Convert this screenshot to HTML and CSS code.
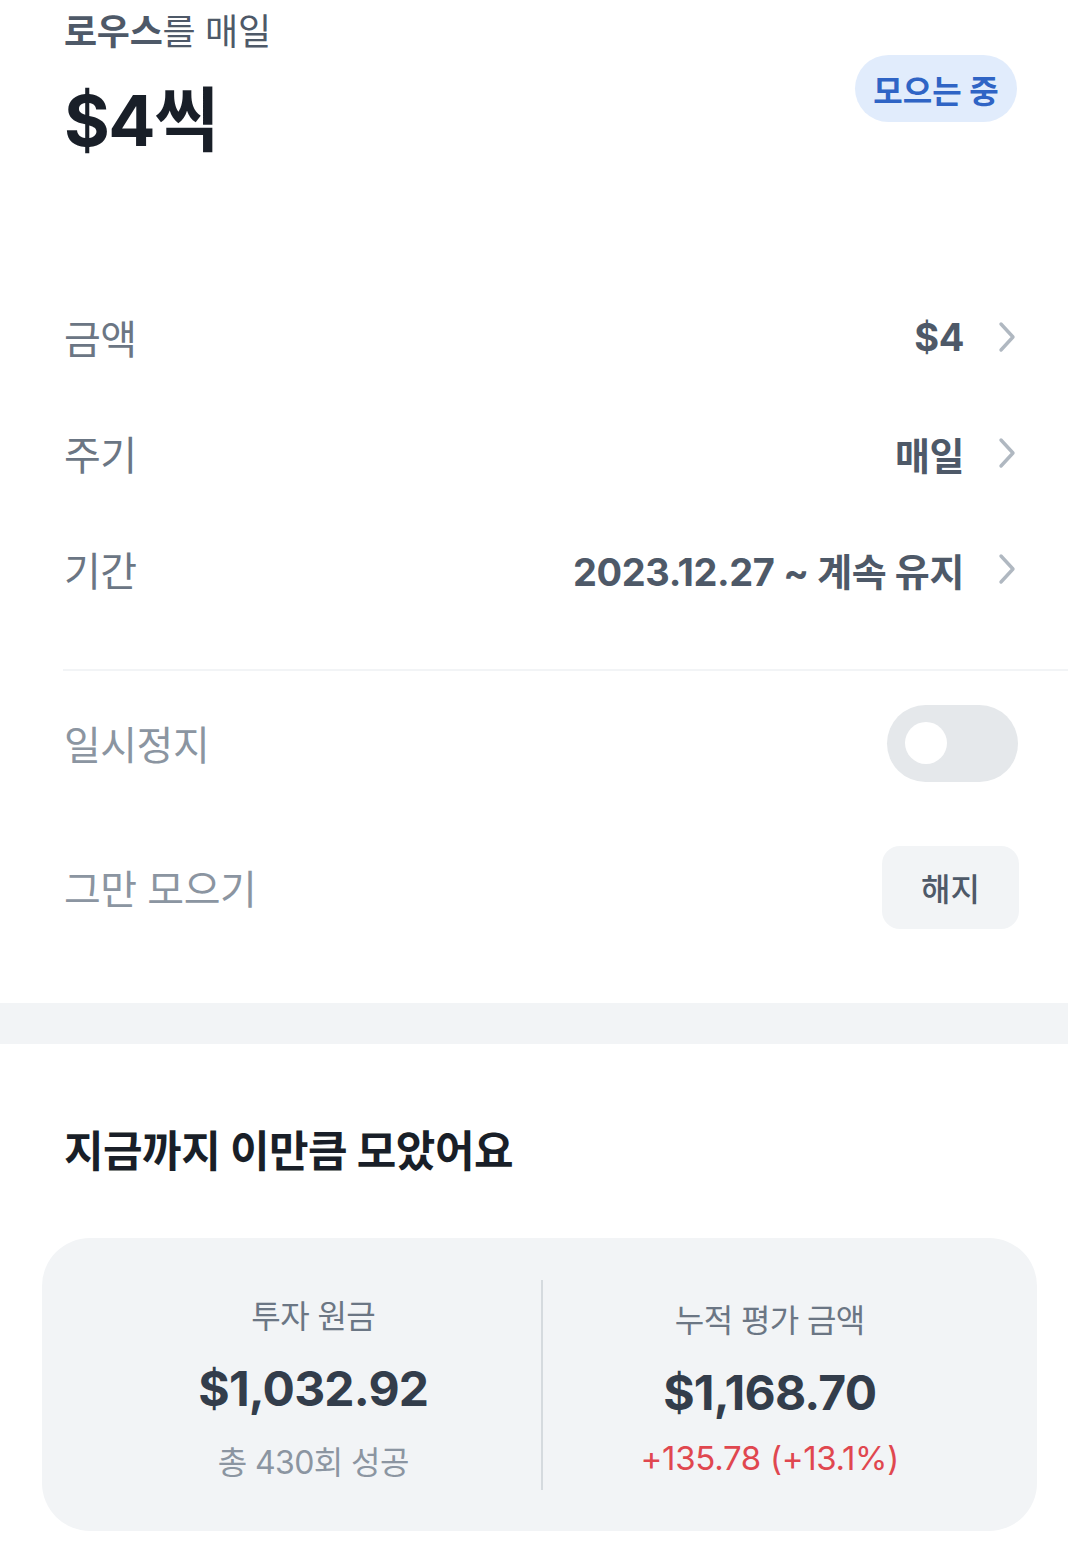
FILE: index.html
```html
<!DOCTYPE html>
<html lang="ko">
<head>
    <meta charset="UTF-8">
    <title>로우스 모으기</title>
    <link rel="stylesheet" href="styles.css">
</head>
<body>
<div class="page">
    <div class="header">
        <div class="title-block">
            <p class="subtitle"><span class="stock">로우스</span>를 매일</p>
            <h1 class="amount">$4씩</h1>
        </div>
        <span class="badge">모으는 중</span>
    </div>

    <div class="settings">
        <div class="row">
            <span class="label">금액</span>
            <span class="value">$4</span>
            <svg class="chevron" viewBox="0 0 20 32"><path d="M4 3 L16 16 L4 29"/></svg>
        </div>
        <div class="row">
            <span class="label">주기</span>
            <span class="value">매일</span>
            <svg class="chevron" viewBox="0 0 20 32"><path d="M4 3 L16 16 L4 29"/></svg>
        </div>
        <div class="row">
            <span class="label">기간</span>
            <span class="value">2023.12.27 ~ 계속 유지</span>
            <svg class="chevron" viewBox="0 0 20 32"><path d="M4 3 L16 16 L4 29"/></svg>
        </div>
    </div>

    <div class="controls">
        <div class="control-row">
            <span class="label light">일시정지</span>
            <div class="toggle"><div class="knob"></div></div>
        </div>
        <div class="control-row">
            <span class="label light">그만 모으기</span>
            <button class="cancel">해지</button>
        </div>
    </div>

    <div class="band"></div>

    <div class="summary">
        <h2>지금까지 이만큼 모았어요</h2>
        <div class="card">
            <div class="col left">
                <span class="col-label">투자 원금</span>
                <span class="col-amount">$1,032.92</span>
                <span class="col-sub">총 430회 성공</span>
            </div>
            <div class="sep"></div>
            <div class="col right">
                <span class="col-label">누적 평가 금액</span>
                <span class="col-amount">$1,168.70</span>
                <span class="col-sub profit">+135.78 (+13.1%)</span>
            </div>
        </div>
    </div>
</div>
</body>
</html>
```

FILE: styles.css
```css
body {
    margin: 0;
    background: #fff;
    font-family: Inter, "Noto Sans CJK KR", sans-serif;
    color: #191f28;
}

.page {
    width: 1068px;
}

.header {
    display: flex;
    justify-content: space-between;
    align-items: flex-start;
    padding: 0 51px 0 64px;
}

.subtitle {
    margin: 8px 0 0;
    font-size: 36px;
    line-height: 48px;
    color: #4e5968;
    letter-spacing: -0.3px;
}

.stock {
    font-weight: 600;
}

.amount {
    margin: 20px 0 0;
    font-size: 70px;
    line-height: 90px;
    font-weight: 700;
    letter-spacing: -1.5px;
}

.badge {
    margin-top: 55px;
    height: 67px;
    width: 162px;
    border-radius: 34px;
    background: #e1ecfc;
    color: #2f64c5;
    font-size: 32px;
    font-weight: 700;
    display: flex;
    align-items: center;
    justify-content: center;
}

.settings {
    margin-top: 113px;
    padding: 0 51px 42px 64px;
}

.row {
    height: 116px;
    display: flex;
    align-items: center;
}

.label {
    font-size: 40px;
    color: #6b7684;
    letter-spacing: -0.5px;
}

.label.light {
    color: #8b95a1;
}

.value {
    margin-left: auto;
    font-size: 38px;
    font-weight: 700;
    color: #4e5968;
    letter-spacing: -0.4px;
}

.chevron {
    width: 20px;
    height: 32px;
    margin-left: 33px;
    fill: none;
    stroke: #b0b8c1;
    stroke-width: 3.4;
    stroke-linecap: round;
    stroke-linejoin: round;
}

.controls {
    margin-left: 63px;
    border-top: 2px solid #f2f4f6;
    padding-right: 50px;
}

.control-row {
    height: 144px;
    display: flex;
    align-items: center;
    justify-content: space-between;
    padding-left: 1px;
}

.toggle {
    width: 131px;
    height: 77px;
    border-radius: 39px;
    background: #e5e8eb;
    display: flex;
    align-items: center;
    padding-left: 18px;
    box-sizing: border-box;
}

.knob {
    width: 42px;
    height: 42px;
    border-radius: 50%;
    background: #fff;
}

.cancel {
    width: 137px;
    height: 83px;
    border: none;
    border-radius: 18px;
    background: #f2f4f6;
    color: #4e5968;
    font-family: inherit;
    font-size: 32px;
    font-weight: 500;
    margin-right: -1px;
}

.band {
    margin-top: 44px;
    height: 41px;
    background: #f2f4f6;
}

.summary h2 {
    margin: 79px 0 0 64px;
    font-size: 43px;
    line-height: 56px;
    font-weight: 700;
    letter-spacing: -0.5px;
}

.card {
    margin: 59px 31px 0 42px;
    height: 293px;
    border-radius: 48px;
    background: #f2f4f6;
    display: flex;
    align-items: center;
}

.sep {
    width: 2px;
    height: 210px;
    background: #d5dade;
}

.col {
    flex: 1;
    display: flex;
    flex-direction: column;
    align-items: center;
}

.col.left {
    padding-left: 44px;
    padding-top: 10px;
}

.col.right {
    padding-right: 40px;
    padding-top: 10px;
}

.col-label {
    font-size: 32px;
    line-height: 44px;
    color: #6b7684;
    letter-spacing: -0.6px;
}

.col-amount {
    margin-top: 20px;
    font-size: 48px;
    line-height: 60px;
    font-weight: 700;
    color: #333d4b;
    letter-spacing: -0.8px;
}

.col-sub {
    margin-top: 22px;
    font-size: 32px;
    line-height: 44px;
    color: #8b95a1;
    letter-spacing: -0.6px;
}

.col-sub.profit {
    color: #e0474f;
    margin-top: 13px;
    font-size: 33px;
    letter-spacing: -0.3px;
}
```
